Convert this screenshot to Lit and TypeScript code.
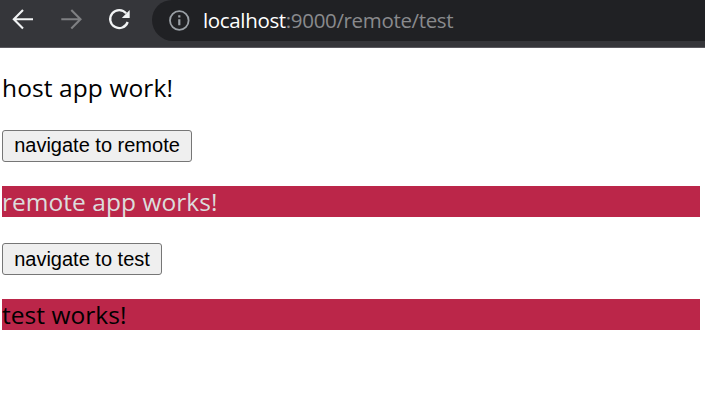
import { LitElement, html, css } from "lit";
import { customElement } from "lit/decorators.js";

@customElement("browser-toolbar")
class BrowserToolbar extends LitElement {
  static styles = css`
    :host {
      display: flex;
      box-sizing: border-box;
      height: 48px;
      background: #35363a;
      border-bottom: 1px solid #5b5a60;
      font-family: "Open Sans", "Noto Sans", sans-serif;
    }
    .nav {
      flex: none;
      width: 152px;
      height: 40px;
    }
    .address {
      flex: 1;
      height: 41px;
      display: flex;
      align-items: center;
      background: #202124;
      border-radius: 20px 0 0 21px;
      padding-left: 15px;
    }
    .info {
      flex: none;
      width: 24px;
      height: 41px;
      margin-right: 12px;
    }
    .url {
      padding-bottom: 2px;
      font-size: 20.5px;
      line-height: 28px;
      letter-spacing: -0.34px;
      color: #898a8d;
      white-space: nowrap;
    }
    .host {
      color: #fff;
    }
  `;
  render() {
    return html`
      <svg class="nav" viewBox="0 0 152 40" fill="none" stroke-width="2.1">
        <path d="M33 19.3H14.5M23 10L13.8 19.3L23 28.6" stroke="#f1f3f4" />
        <path d="M61.3 19.3H79.8M71.3 10L80.5 19.3L71.3 28.6" stroke="#7f8083" />
        <path d="M126.2 13.4A9 9 0 1 0 127.7 22" stroke="#f1f3f4" stroke-width="2.3" />
        <path d="M129.7 10V17.9H121.8Z" fill="#f1f3f4" />
      </svg>
      <div class="address">
        <svg class="info" viewBox="0 0 24 41" fill="none">
          <circle cx="12.3" cy="20.5" r="9.3" stroke="#9aa0a6" stroke-width="1.8" />
          <path d="M12.3 19.3V25.3M12.3 15.3V17.5" stroke="#9aa0a6" stroke-width="2.2" />
        </svg>
        <div class="url"><span class="host">localhost</span>:9000/remote/test</div>
      </div>
    `;
  }
}

@customElement("app-root")
class AppRoot extends LitElement {
  static styles = css`
    :host {
      display: block;
      height: 404px;
      overflow: hidden;
      background: #fff;
      font-family: "Open Sans", "Noto Sans", sans-serif;
      color: #000;
    }
    .page {
      display: flex;
      flex-direction: column;
      align-items: flex-start;
      padding: 25px 5px 0 2px;
    }
    .line {
      align-self: stretch;
      height: 31px;
      margin: 0 0 26px;
      font-size: 24.5px;
      letter-spacing: 0.04px;
      line-height: 31px;
      white-space: nowrap;
    }
    .title {
      line-height: 29px;
      letter-spacing: 0.1px;
    }
    .band {
      background: #bb2649;
    }
    .remote {
      color: #dcdcdc;
    }
    .btn {
      box-sizing: border-box;
      height: 32px;
      margin: 0 0 24px;
      padding: 0 0 1px;
      border: 1px solid #767676;
      border-radius: 3px;
      background: #efefef;
      color: #000;
      font: 20px/29px "Liberation Sans", Arial, sans-serif;
      text-align: center;
      white-space: nowrap;
    }
    .wide {
      width: 190px;
    }
    .narrow {
      width: 160px;
      padding: 1px 0 0;
    }
  `;
  render() {
    return html`
      <browser-toolbar></browser-toolbar>
      <main class="page">
        <p class="line title"><span>host app work!</span></p>
        <button class="btn wide">navigate to remote</button>
        <p class="line band remote"><span>remote app works!</span></p>
        <button class="btn narrow">navigate to test</button>
        <p class="line band"><span>test works!</span></p>
      </main>
    `;
  }
}
